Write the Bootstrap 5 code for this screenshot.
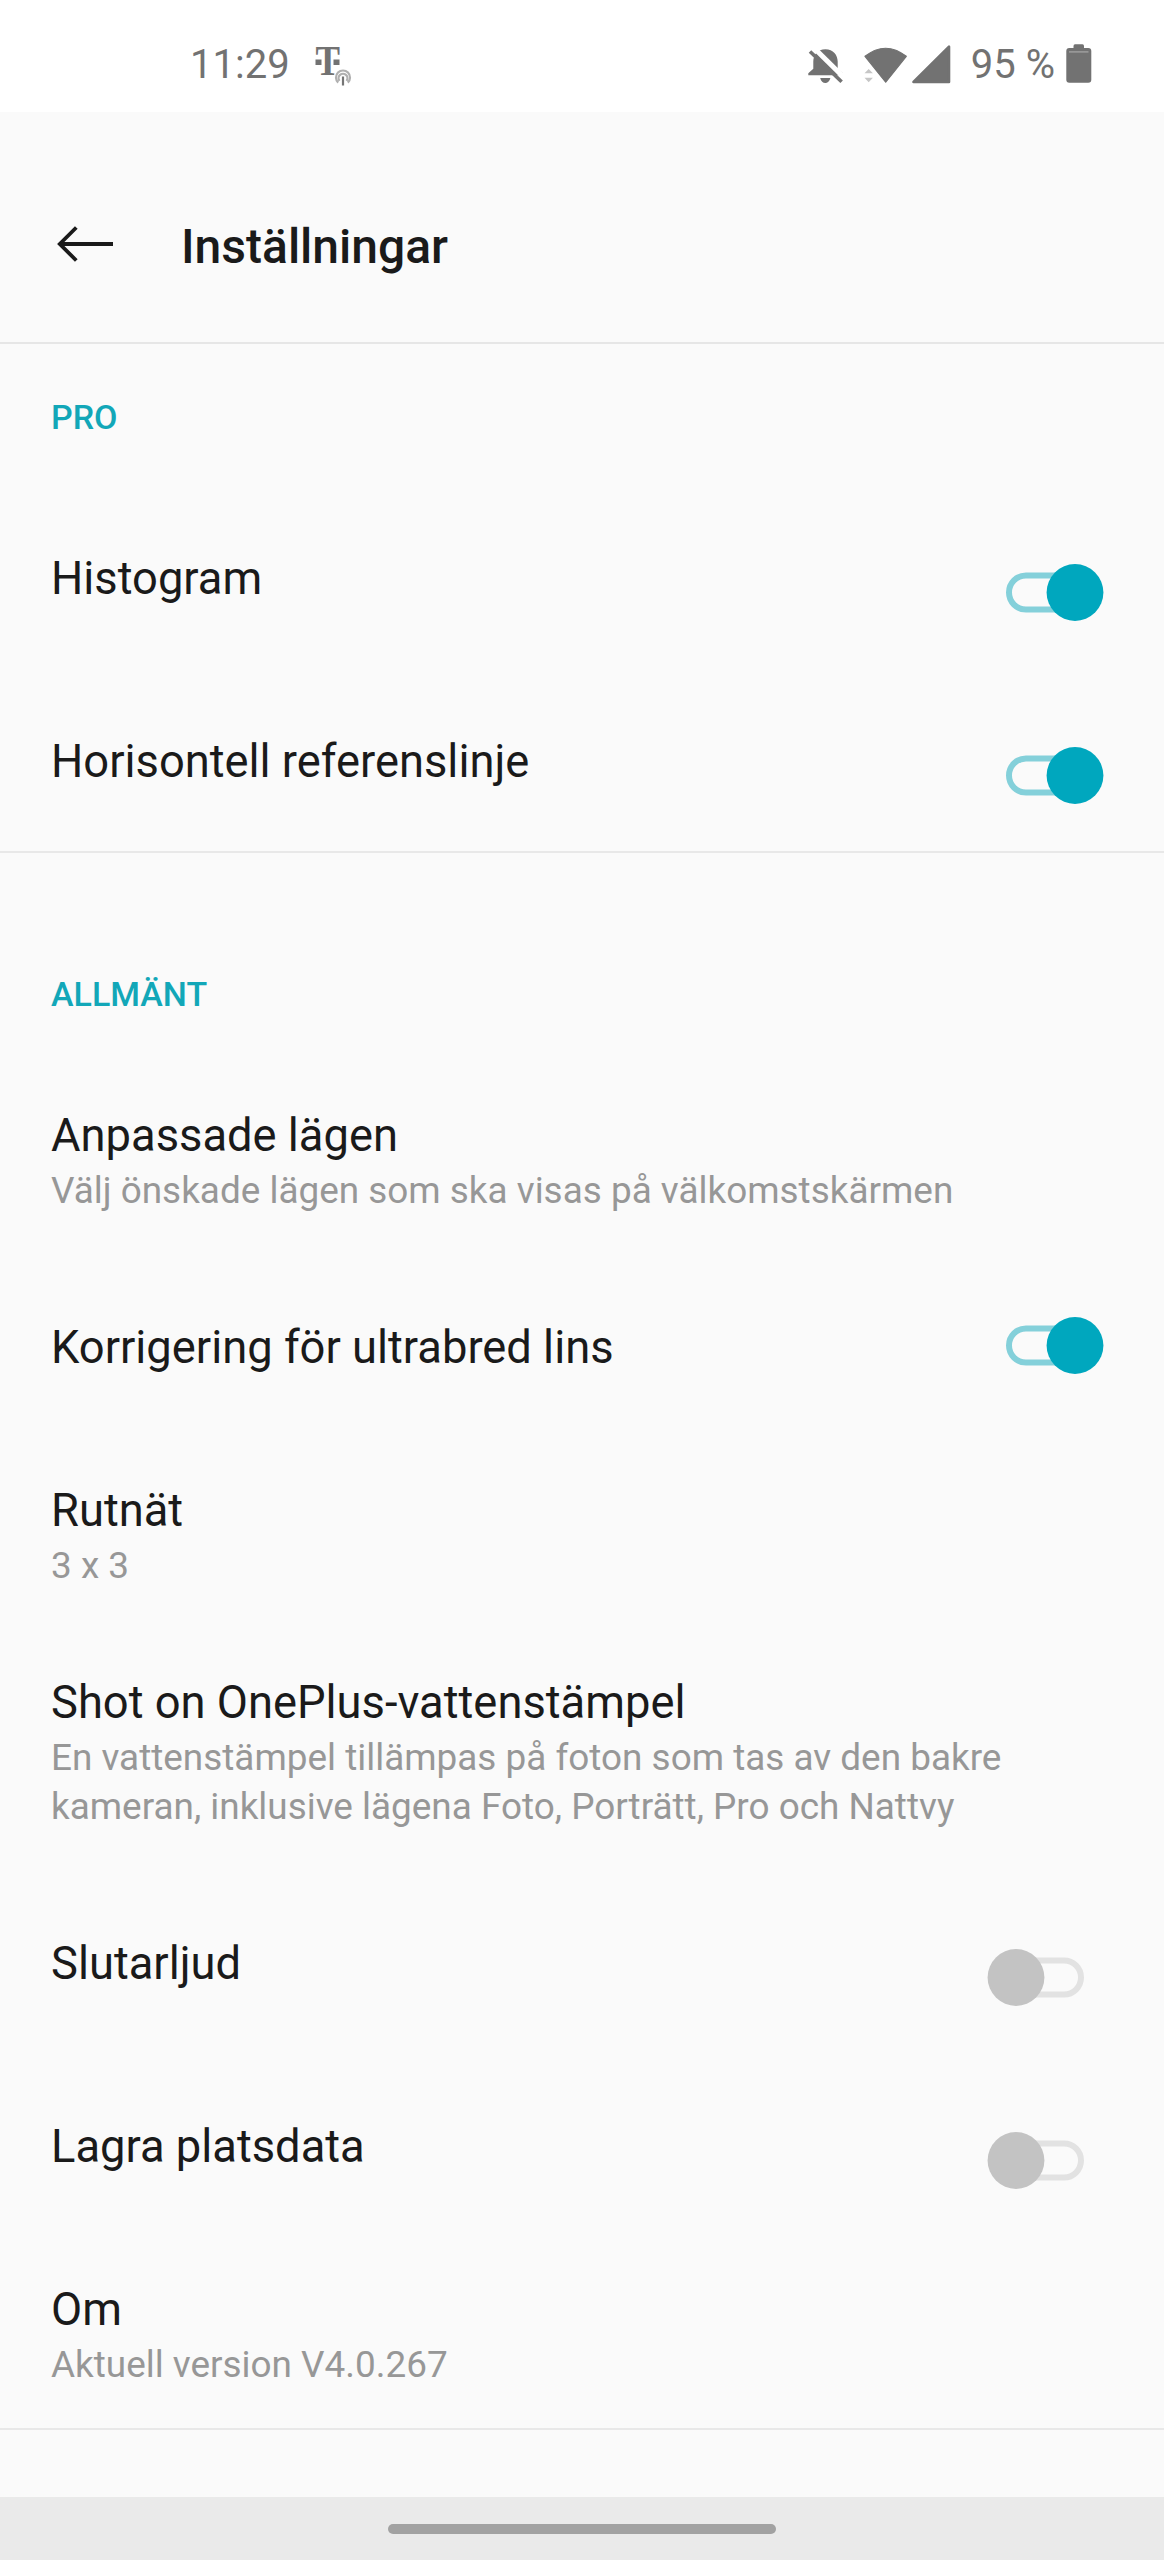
<!DOCTYPE html>
<html lang="sv">
<head>
<meta charset="utf-8">
<meta name="viewport" content="width=device-width, initial-scale=1">
<title>Inställningar</title>
<link href="https://cdn.jsdelivr.net/npm/bootstrap@5.3.0/dist/css/bootstrap.min.css" rel="stylesheet">
<style>
body { font-family: Roboto, "Liberation Sans", sans-serif; background: #fafafa; color: #1a1a1a; }
.screen { height: 2560px; overflow: hidden; }
.statusbar { height: 112px; background: #fff; color: #727272; font-size: 40px; line-height: 48px; padding: 30px 71px 0 190px; }
.statusbar > span { padding-top: 11px; }
.statusbar svg { display: block; flex: none; }
.clock { width: 123px; }
.battery-text { margin: 0 10px 0 14px; white-space: nowrap; }
.appbar { height: 232px; border-bottom: 2px solid #e6e6e6; padding: 107px 0 0 57px; }
.appbar h1 { font-size: 48px; line-height: 56px; font-weight: 500; margin: 0 0 0 67px; }
.section-label { color: #12a7b8; font-size: 34px; line-height: 40px; font-weight: 500; margin: 0; padding: 53px 51px 0; height: 145px; }
.section-label.spaced { padding-top: 121px; height: 213px; }
.setting { padding: 44px 60px 0 51px; height: 192px; }
.setting.toggle-row { padding-top: 64px; height: 183px; }
.setting.long { height: 241px; }
.setting-title { font-size: 45.3px; line-height: 52px; }
.setting-note { font-size: 36.9px; line-height: 49px; margin-top: 4px; color: #979797; }
.rule-below { border-bottom: 2px solid #e8e8e8; }
.setting.last-pro { height: 181px; }
.setting.last-general { height: 190px; }
.switch-track { width: 98px; height: 57px; margin: 10.5px 0 0; }
.center-switch .switch-track { margin-top: -5.5px; }
.off .switch-track { margin-right: 19px; }
.navbar-gesture { height: 63px; background: #eaeaea; }
.navbar-gesture div { width: 388px; height: 10px; background: #a2a2a2; }
</style>
<script src="https://cdn.jsdelivr.net/npm/bootstrap@5.3.0/dist/js/bootstrap.bundle.min.js"></script>
</head>
<body>
<svg width="0" height="0" class="position-absolute" aria-hidden="true">
  <symbol id="sw-on" viewBox="0 0 98 57">
    <rect x="3" y="11.5" width="72" height="34" rx="17" fill="none" stroke="#84d0da" stroke-width="6"/>
    <circle cx="69" cy="28.5" r="28.4" fill="#00a7be"/>
  </symbol>
  <symbol id="sw-off" viewBox="0 0 98 57">
    <rect x="22.5" y="11.5" width="71.5" height="34" rx="17" fill="none" stroke="#e2e2e2" stroke-width="6"/>
    <circle cx="29" cy="28.5" r="28.4" fill="#c3c3c3"/>
  </symbol>
</svg>
<main class="screen d-flex flex-column">
  <div class="statusbar d-flex align-items-start">
    <span class="clock">11:29</span>
    <svg width="40" height="62" viewBox="313 30 40 62">
      <text x="315.5" y="74.6" font-family="Liberation Serif" font-weight="700" font-size="43" textLength="24.5" lengthAdjust="spacingAndGlyphs" fill="#727272">T</text>
      <path d="M315.5 59.5h6v5.5h-6zM333.5 59.5h6v5.5h-6z" fill="#727272"/>
      <g fill="none" stroke="#b0b0b0"><circle cx="343" cy="77" r="8.8" fill="#fff" stroke="none"/><path d="M338.2 82.6A7 7 0 1 1 347.8 82.6" stroke-width="2.2"/><path d="M339.5 80.8A4.4 4.4 0 1 1 346.5 80.8" stroke-width="2.2"/></g>
      <path d="M343 76.5V85.5" stroke="#757575" stroke-width="2.2"/>
    </svg>
    <svg class="ms-auto" width="152" height="62" viewBox="804 30 152 62" fill="#727272">
      <path d="M807.3 75.2V73.3L812.3 68.8V61.5C812.3 55 816.5 49.2 824.4 49.2S836.7 55 836.7 61.5V68.8L841.8 73.3V75.2ZM819.2 78H829.4C828.5 81.6 826.6 83 824.3 83S820 81.6 819.2 78Z"/>
      <path d="M811.5 46.5L845 79.5" stroke="#fff" stroke-width="5"/>
      <path d="M809 51.5L840.6 81.8" stroke="#727272" stroke-width="3.6"/>
      <path d="M864 56.3Q884.6 40.2 905.3 56.3L884.7 82.2Z" stroke="#727272" stroke-width="1.2" stroke-linejoin="round"/>
      <path d="M863.5 73.3L867.7 69L871.9 73.3ZM863.5 77.8H871.9L867.7 82.3Z" fill="#c6c6c6"/>
      <path d="M912.5 82L948 46.7V82Z" stroke="#727272" stroke-width="2.6" stroke-linejoin="round"/>
    </svg>
    <span class="battery-text">95 %</span>
    <svg width="28" height="62" viewBox="1065 30 28 62" fill="#727272">
      <path d="M1073.5 48V46Q1073.5 44.3 1075 44.3H1082.5Q1084 44.3 1084 46V48H1088.3Q1091.3 48 1091.3 51V79.7Q1091.3 82.7 1088.3 82.7H1069.3Q1066.3 82.7 1066.3 79.7V51Q1066.3 48 1069.3 48Z"/>
      <path d="M1069 51.9H1088.5" stroke="#a4a4a4" stroke-width="1.3"/>
    </svg>
  </div>

  <header class="appbar d-flex align-items-start">
    <svg class="mt-1 flex-shrink-0" width="57" height="40" viewBox="57 223 57 40" fill="none" stroke="#1a1a1a" stroke-width="3.8"><path d="M113 244H60M76.3 227.5L59.8 244L76.3 260.5"/></svg>
    <h1>Inställningar</h1>
  </header>

  <section>
    <h2 class="section-label">PRO</h2>
    <div class="setting toggle-row d-flex justify-content-between align-items-start"><div class="setting-title">Histogram</div><svg class="switch-track"><use href="#sw-on"/></svg></div>
    <div class="setting toggle-row last-pro rule-below d-flex justify-content-between align-items-start"><div class="setting-title">Horisontell referenslinje</div><svg class="switch-track"><use href="#sw-on"/></svg></div>
  </section>

  <section class="flex-grow-1">
    <h2 class="section-label spaced">ALLMÄNT</h2>
    <div class="setting"><div class="setting-title">Anpassade lägen</div><div class="setting-note">Välj önskade lägen som ska visas på välkomstskärmen</div></div>
    <div class="setting toggle-row center-switch d-flex justify-content-between align-items-start"><div class="setting-title">Korrigering för ultrabred lins</div><svg class="switch-track"><use href="#sw-on"/></svg></div>
    <div class="setting"><div class="setting-title">Rutnät</div><div class="setting-note">3 x 3</div></div>
    <div class="setting long"><div class="setting-title">Shot on OnePlus-vattenstämpel</div><div class="setting-note">En vattenstämpel tillämpas på foton som tas av den bakre<br>kameran, inklusive lägena Foto, Porträtt, Pro och Nattvy</div></div>
    <div class="setting toggle-row off d-flex justify-content-between align-items-start"><div class="setting-title">Slutarljud</div><svg class="switch-track"><use href="#sw-off"/></svg></div>
    <div class="setting toggle-row off d-flex justify-content-between align-items-start"><div class="setting-title">Lagra platsdata</div><svg class="switch-track"><use href="#sw-off"/></svg></div>
    <div class="setting last-general rule-below"><div class="setting-title">Om</div><div class="setting-note">Aktuell version V4.0.267</div></div>
  </section>

  <footer class="navbar-gesture d-flex align-items-center justify-content-center flex-shrink-0"><div class="rounded-pill"></div></footer>
</main>
</body>
</html>
